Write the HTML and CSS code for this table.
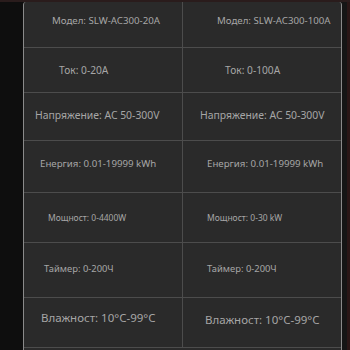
FILE: index.html
```html
<!DOCTYPE html>
<html>
<head>
<meta charset="utf-8">
<link rel="stylesheet" href="styles.css">
</head>
<body>
<div class="topbar"></div>
<div class="frame">
  <div class="left-strip"></div>
  <div class="table">
    <div class="row r1">
      <div class="cell model p28">Модел: SLW-AC300-20A</div>
      <div class="cell model p34">Модел: SLW-AC300-100A</div>
    </div>
    <div class="row r2">
      <div class="cell tok p35">Ток: 0-20A</div>
      <div class="cell tok p42">Ток: 0-100A</div>
    </div>
    <div class="row r3">
      <div class="cell volt p11">Напряжение: AC 50-300V</div>
      <div class="cell volt p17">Напряжение: AC 50-300V</div>
    </div>
    <div class="row r4">
      <div class="cell energy p16">Енергия: 0.01-19999 kWh</div>
      <div class="cell energy p24">Енергия: 0.01-19999 kWh</div>
    </div>
    <div class="row r5">
      <div class="cell power p24">Мощност: 0-4400W</div>
      <div class="cell power p24">Мощност: 0-30 kW</div>
    </div>
    <div class="row r6">
      <div class="cell timer p20">Таймер: 0-200Ч</div>
      <div class="cell timer p24">Таймер: 0-200Ч</div>
    </div>
    <div class="row r7">
      <div class="cell humid p17">Влажност: 10°C-99°C</div>
      <div class="cell humid low p22">Влажност: 10°C-99°C</div>
    </div>
  </div>
  <div class="right-strip"></div>
</div>
</body>
</html>
```
FILE: styles.css
```css
html, body {
  margin: 0;
  padding: 0;
  width: 350px;
  height: 350px;
  overflow: hidden;
  background: #0f0f0f;
  font-family: "Noto Sans", "Open Sans", sans-serif;
}
.topbar {
  height: 2px;
  background: #2a1c1c;
}
.frame {
  display: flex;
  height: 348px;
}
.left-strip {
  width: 23px;
  background: #0e0e0e;
}
.table {
  width: 317px;
  border-left: 1px solid #8a8a8a;
  border-right: 1px solid #8a8a8a;
  border-top-left-radius: 3px;
  border-top-right-radius: 3px;
  background: #2a2a2a;
  display: flex;
  flex-direction: column;
}
.right-strip {
  width: 8px;
  background: linear-gradient(to right, #151515 0 5px, #2a1616 5px);
}
.row {
  display: grid;
  grid-template-columns: 158px 159px;
  border-bottom: 1px solid #4c4c4c;
}
.r1 { height: 45px; }
.r2 { height: 44px; }
.r3 { height: 47px; }
.r4 { height: 51px; }
.r5 { height: 49px; }
.r6 { height: 54px; }
.r7 { height: 49px; }
.cell {
  display: flex;
  align-items: center;
  color: #a6a6a6;
  white-space: nowrap;
}
.cell + .cell {
  border-left: 1px solid #4c4c4c;
}
.model { font-size: 9.7px; padding-bottom: 8px; }
.tok { font-size: 10.2px; padding-bottom: 1px; }
.volt { font-size: 10.4px; padding-bottom: 3px; }
.energy { font-size: 9.7px; padding-bottom: 6px; }
.power { font-size: 8.5px; }
.timer { font-size: 9.4px; padding-bottom: 4px; }
.humid { font-size: 11.5px; padding-bottom: 10px; }
.humid.low { padding-bottom: 6px; }
.p11 { padding-left: 11px; }
.p16 { padding-left: 16px; }
.p17 { padding-left: 17px; }
.p20 { padding-left: 20px; }
.p22 { padding-left: 22px; }
.p24 { padding-left: 24px; }
.p28 { padding-left: 28px; }
.p34 { padding-left: 34px; }
.p35 { padding-left: 35px; }
.p42 { padding-left: 42px; }
```
